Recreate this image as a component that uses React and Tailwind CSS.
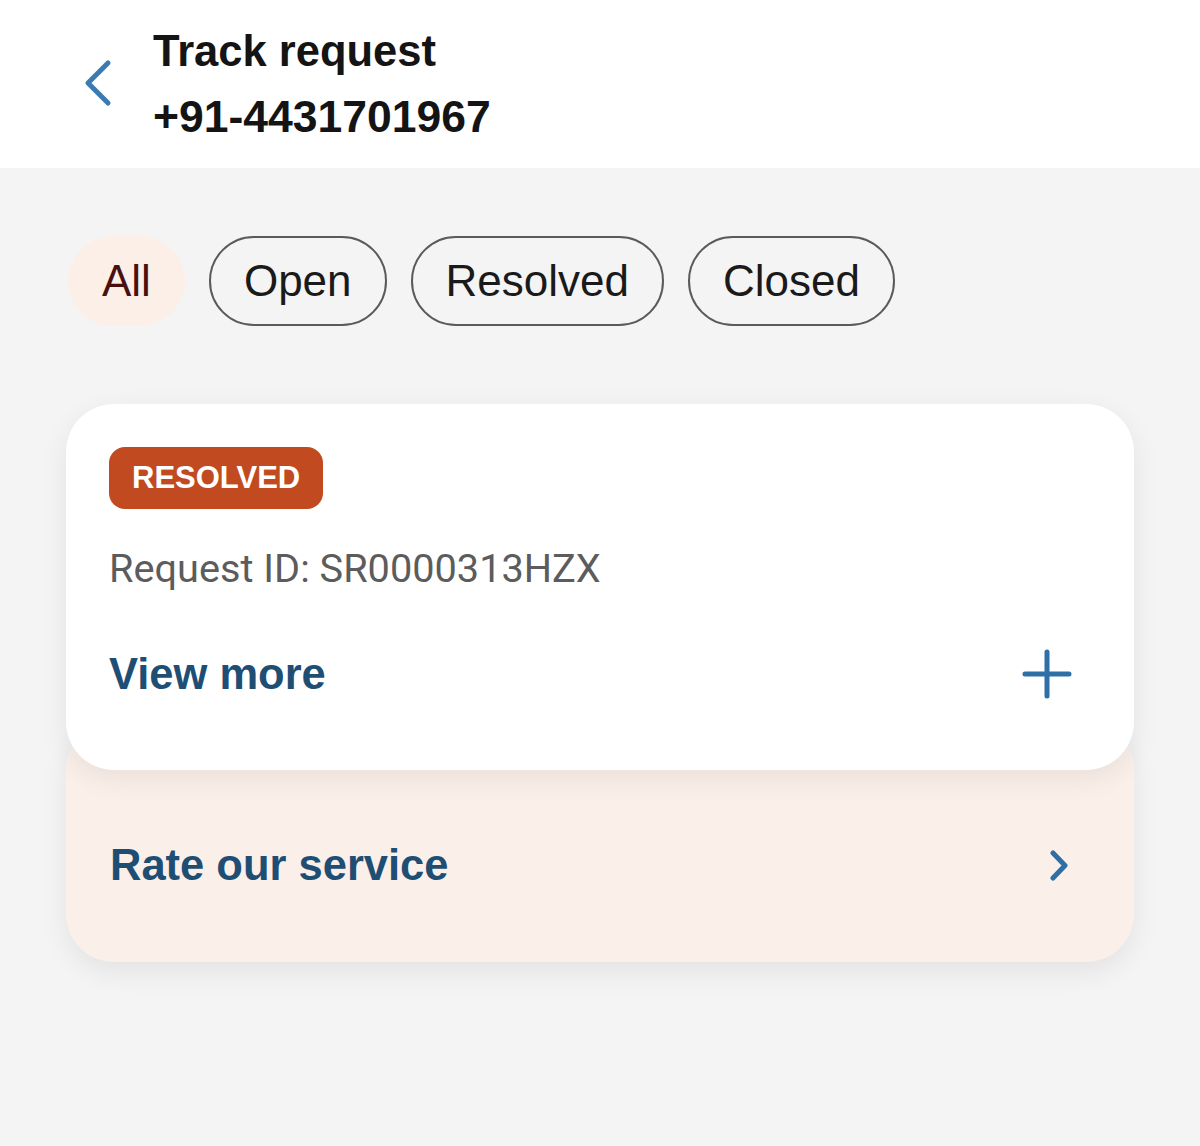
import React from "react";

const sans = { fontFamily: '"Liberation Sans", Arial, sans-serif' };

function Chip({ label, active }) {
  return (
    <div
      className={
        "h-[90px] flex items-center rounded-full text-[44px] " +
        (active
          ? "bg-[#fcefe7] text-[#4a1010] border-2 border-transparent px-[32px]"
          : "border-2 border-[#5a5a5a] text-[#1a1a1a] px-[33px]")
      }
    >
      {label}
    </div>
  );
}

export default function App() {
  return (
    <div className="w-[1200px] h-[1146px] bg-[#f4f4f4] overflow-hidden" style={sans}>
      <div className="h-[168px] bg-white flex items-center">
        <div className="w-[153px] flex justify-start pl-[82px] -mt-[3px]">
          <svg width="32" height="48" viewBox="0 0 32 48" fill="none">
            <path d="M26 4 L6 24 L26 44" stroke="#3b7bb2" strokeWidth="5" strokeLinecap="round" strokeLinejoin="round" />
          </svg>
        </div>
        <div className="font-bold text-[43px] leading-[65px] text-[#141414]">
          <div className="text-[43.5px]">Track request</div>
          <div className="text-[44.5px]">+91-4431701967</div>
        </div>
      </div>

      <div className="flex gap-[24px] pl-[68px] mt-[68px]">
        <Chip label="All" active />
        <Chip label="Open" />
        <Chip label="Resolved" />
        <Chip label="Closed" />
      </div>

      <div className="mx-[66px] mt-[78px] flex flex-col">
        <div className="relative z-10 bg-white rounded-[48px] h-[366px] px-[43px] pt-[43px] shadow-[0_8px_28px_rgba(0,0,0,0.07)]">
          <div className="inline-flex items-center h-[62px] px-[23px] rounded-[16px] bg-[#c14a20] text-white font-bold text-[31px]">
            RESOLVED
          </div>
          <div className="mt-[36px] text-[39.7px] text-[#5c5c5c] leading-[48px]" style={{ fontFamily: 'Roboto, "Liberation Sans", sans-serif' }}>
            Request ID: SR0000313HZX
          </div>
          <div className="mt-[55px] flex items-center justify-between">
            <div className="font-bold text-[43.5px] text-[#1f4e75] leading-[50px]">View more</div>
            <svg width="50" height="50" viewBox="0 0 50 50" className="mr-[19px] mt-[1px]" fill="none">
              <path d="M25 3 V47 M3 25 H47" stroke="#2d6fa6" strokeWidth="5" strokeLinecap="round" />
            </svg>
          </div>
        </div>
        <div className="relative z-0 -mt-[48px] pt-[48px] h-[240px] bg-[#fbf0e9] rounded-[48px] px-[44px] flex items-center justify-between shadow-[0_10px_28px_rgba(0,0,0,0.07)]">
          <div className="font-bold text-[43.5px] text-[#1f4e75]">Rate our service</div>
          <svg width="24" height="32" viewBox="0 0 24 32" className="mr-[18px]" fill="none">
            <path d="M5 3 L17 15.5 L5 28" stroke="#2d6fa6" strokeWidth="5" strokeLinecap="round" strokeLinejoin="round" />
          </svg>
        </div>
      </div>
    </div>
  );
}
